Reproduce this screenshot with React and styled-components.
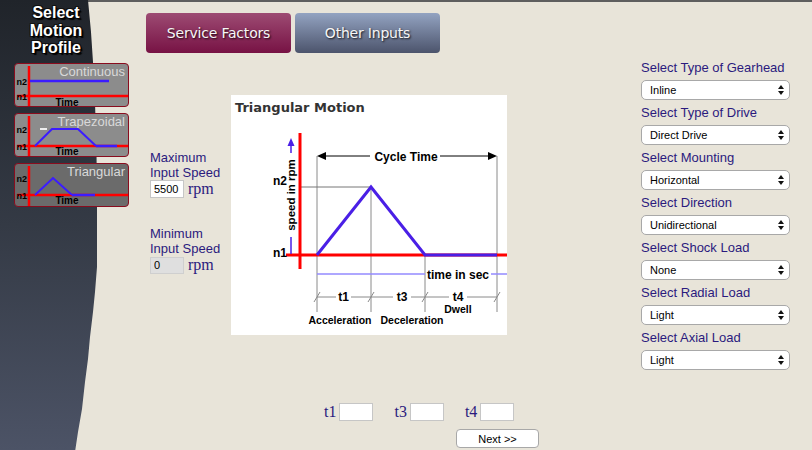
import React from 'react';
import styled, { createGlobalStyle } from 'styled-components';

const Global = createGlobalStyle`
  html, body { margin: 0; padding: 0; background: #e8e4d9; }
  body { font-family: "Liberation Sans", Arial, sans-serif; }
  * { box-sizing: border-box; }
`;

const INK = '#2b1a7e';
const BLUE = '#4a1fe6';

const Page = styled.div`
  display: flex;
  width: 812px;
  height: 450px;
  border-top: 2px solid #5e5e5e;
  background: #e8e4d9;
  position: relative;
`;

const Sidebar = styled.aside`
  position: relative;
  z-index: 0;
  flex: 0 0 134px;
  padding: 2px 0 0 14px;
  display: flex;
  flex-direction: column;
  gap: 6px;
  &::before {
    content: "";
    position: absolute;
    left: 0;
    top: -2px;
    bottom: 0;
    width: 98px;
    background: linear-gradient(#20242a 0%, #343a45 50%, #4c5366 100%);
    clip-path: polygon(0 0, 88px 0, 91px 32px, 93px 62px, 95px 102px, 96.5px 152px, 97px 202px, 97px 267px, 95px 292px, 93px 312px, 90px 337px, 88px 359px, 85px 382px, 82px 409px, 78px 432px, 75px 452px, 0 452px);
    z-index: -1;
  }
`;

const SideTitle = styled.h1`
  margin: 0;
  width: 84px;
  text-align: center;
  font: bold 16px/17.5px "Liberation Sans", Arial, sans-serif;
  color: #ffffff;
  text-shadow: 1px 1px 0 #000, -1px -1px 0 #111, 1px -1px 0 #111, -1px 1px 0 #111, 2px 2px 1px #000;
`;

const Card = styled.button`
  width: 115px;
  height: 44px;
  padding: 0;
  border: 1px solid #8a0c1e;
  border-radius: 4px;
  background: ${p => (p.$active ? '#6b6b6b' : '#8c8c8c')};
  cursor: pointer;
  overflow: hidden;
  svg { display: block; }
`;

const Main = styled.main`
  flex: 1;
  display: flex;
  flex-direction: column;
`;

const Tabs = styled.nav`
  display: flex;
  gap: 4px;
  margin: 11px 0 0 12px;
`;

const Tab = styled.button`
  width: 145px;
  height: 40px;
  border: 0;
  border-radius: 4px;
  background: ${p =>
    p.$variant === 'maroon'
      ? 'linear-gradient(#9d4b73, #771244)'
      : 'linear-gradient(#93a3c1, #4c546c)'};
  color: #f6f6f6;
  font: 14px "DejaVu Sans", Verdana, sans-serif;
  letter-spacing: -0.2px;
  text-shadow: 1px 1px 2px rgba(0, 0, 0, 0.85);
  cursor: pointer;
`;

const Content = styled.div`
  display: flex;
  align-items: flex-start;
`;

const SpeedCol = styled.div`
  width: 97px;
  padding-left: 16px;
  margin-top: 97px;
  display: flex;
  flex-direction: column;
  gap: 28px;
`;

const SpeedField = styled.div`
  display: flex;
  flex-direction: column;
`;

const FieldLabel = styled.label`
  font: 13px/15px "Liberation Sans", Arial, sans-serif;
  color: ${INK};
`;

const InputRow = styled.div`
  display: flex;
  align-items: center;
  gap: 4px;
`;

const SmallInput = styled.input`
  width: 34px;
  height: ${p => (p.$tall ? '18px' : '17px')};
  padding: 0 3px;
  border: 1px solid ${p => (p.disabled ? '#cfcfcf' : '#c6c6c6')};
  background: ${p => (p.disabled ? '#dfdfdf' : '#ffffff')};
  font: 11px "Liberation Sans", Arial, sans-serif;
  color: #000;
`;

const Unit = styled.span`
  font: 16px "Liberation Serif", "Times New Roman", serif;
  color: ${INK};
`;

const ChartBox = styled.figure`
  margin: 42px 0 0;
  width: 276px;
  height: 240px;
  background: #ffffff;
  display: flex;
  flex-direction: column;
  svg { display: block; }
`;

const ChartTitle = styled.figcaption`
  height: 24px;
  padding: 1px 0 0 4px;
  font: bold 13px/24px "DejaVu Sans", Verdana, sans-serif;
  color: #333333;
`;

const RightCol = styled.div`
  margin: 7px 0 0 134px;
  width: 149px;
  display: flex;
  flex-direction: column;
  gap: 5px;
`;

const SelectField = styled.div`
  display: flex;
  flex-direction: column;
  gap: 4px;
`;

const SelectLabel = styled.label`
  font: 13px/16px "Liberation Sans", Arial, sans-serif;
  color: ${INK};
  white-space: nowrap;
`;

const SelectWrap = styled.div`
  position: relative;
  height: 20px;
`;

const Select = styled.select`
  appearance: none;
  -webkit-appearance: none;
  width: 100%;
  height: 20px;
  padding: 0 0 0 8px;
  border: 1px solid #a8a8a8;
  border-radius: 5px;
  background: #ffffff;
  font: 11px "Liberation Sans", Arial, sans-serif;
  color: #000;
`;

const Arrows = styled.svg`
  position: absolute;
  right: 6px;
  top: 5px;
  pointer-events: none;
`;

const Bottom = styled.div`
  margin: 33px 0 0 190px;
  display: flex;
  flex-direction: column;
  align-items: flex-start;
  gap: 8px;
`;

const TRow = styled.div`
  display: flex;
  align-items: center;
  gap: 21px;
`;

const TGroup = styled.label`
  display: flex;
  align-items: center;
  gap: 3px;
  font: 16px "Liberation Serif", "Times New Roman", serif;
  color: ${INK};
`;

const NextButton = styled.button`
  margin-left: 132px;
  width: 83px;
  height: 19px;
  padding: 0;
  border: 1px solid #a8a8a8;
  border-radius: 4px;
  background: #ffffff;
  font: 11px "Liberation Sans", Arial, sans-serif;
  color: #000;
  cursor: pointer;
`;

const cardText = { fontFamily: '"Liberation Sans", Arial, sans-serif' };

function MiniChart({ label, top, base, shape, flatTo, whiteTick, labelY, timeY }) {
  return (
    <svg width="113" height="42" viewBox="0 0 113 42">
      <text x="110" y={labelY} textAnchor="end" fontSize="13" fill="#d9d9d9" style={cardText}>{label}</text>
      {whiteTick && <line x1="25" y1={top} x2="32" y2={top} stroke="#eeeeee" strokeWidth="2" />}
      <line x1="2" y1={base} x2="113" y2={base} stroke="#ff0000" strokeWidth="2.5" />
      <line x1="14" y1="2" x2="14" y2="42" stroke="#ff0000" strokeWidth="2.5" />
      {shape === 'flat' && <line x1="15" y1={top} x2="94" y2={top} stroke="#3b1cff" strokeWidth="2.5" />}
      {shape !== 'flat' && (
        <polyline points={shape} fill="none" stroke="#3b1cff" strokeWidth="2" />
      )}
      {flatTo && <line x1={flatTo[0]} y1={base} x2={flatTo[1]} y2={base} stroke="#3b1cff" strokeWidth="2.5" />}
      <text x="1.5" y={top + 3.5} fontSize="9" fontWeight="bold" fill="#000" style={cardText}>n2</text>
      <text x="1.5" y={base + 3.5} fontSize="9" fontWeight="bold" fill="#000" style={cardText}>n1</text>
      <text x="52" y={timeY} textAnchor="middle" fontSize="10" fontWeight="bold" fill="#000" style={cardText}>Time</text>
    </svg>
  );
}

const profiles = [
  { label: 'Continuous', top: 17, base: 32, shape: 'flat', labelY: 11.5, timeY: 41.5 },
  { label: 'Trapezoidal', top: 15, base: 32, shape: '20,32 37,15 63,15 81,32', flatTo: [81, 102], whiteTick: true, labelY: 11.5, timeY: 41 },
  { label: 'Triangular', top: 14, base: 31, shape: '20,31 38,14 57,31', flatTo: [57, 80], labelY: 11.5, timeY: 40, active: true },
];

const T = { fontFamily: '"Liberation Sans", Arial, sans-serif', fontWeight: 'bold' };

function TriangularChart() {
  const grey = '#8a8a8a';
  return (
    <svg width="276" height="216" viewBox="0 24 276 216">
      <line x1="86" y1="61" x2="86" y2="217" stroke={grey} strokeWidth="1" />
      <line x1="140" y1="92" x2="140" y2="217" stroke={grey} strokeWidth="1" />
      <line x1="194" y1="160" x2="194" y2="217" stroke={grey} strokeWidth="1" />
      <line x1="266" y1="61" x2="266" y2="217" stroke={grey} strokeWidth="1" />
      <line x1="68" y1="92" x2="140" y2="92" stroke="#777" strokeWidth="1" />

      <line x1="69" y1="38" x2="69" y2="174" stroke="#ff0000" strokeWidth="3" />
      <line x1="55" y1="160" x2="276" y2="160" stroke="#ff0000" strokeWidth="3" />

      <polyline points="86,160 140,92 194,160 266,160" fill="none" stroke={BLUE} strokeWidth="3" />

      <polygon points="60,43 56.5,51 63.5,51" fill={BLUE} />
      <line x1="60" y1="50" x2="60" y2="58" stroke={BLUE} strokeWidth="1.5" />
      <line x1="60" y1="142" x2="60" y2="159" stroke={BLUE} strokeWidth="1.5" />
      <text x="0" y="0" transform="translate(64 100) rotate(-90)" textAnchor="middle" fontSize="11.5" fill="#000" style={T}>speed in rpm</text>

      <text x="42" y="90" fontSize="12" fill="#000" style={T}>n2</text>
      <text x="42" y="162" fontSize="12" fill="#000" style={T}>n1</text>

      <line x1="90" y1="61" x2="139" y2="61" stroke="#000" strokeWidth="1" />
      <line x1="209" y1="61" x2="262" y2="61" stroke="#000" strokeWidth="1" />
      <polygon points="86,61 95,57 95,65" fill="#000" />
      <polygon points="266,61 257,57 257,65" fill="#000" />
      <text x="175" y="65.5" textAnchor="middle" fontSize="12" fill="#000" style={T}>Cycle Time</text>

      <line x1="86" y1="179" x2="194" y2="179" stroke="#938aff" strokeWidth="1.5" />
      <line x1="260" y1="179" x2="276" y2="179" stroke="#938aff" strokeWidth="1.5" />
      <text x="227" y="183.5" textAnchor="middle" fontSize="12" fill="#000" style={T}>time in sec</text>

      <line x1="86" y1="202" x2="105" y2="202" stroke={grey} strokeWidth="1" />
      <line x1="120" y1="202" x2="162" y2="202" stroke={grey} strokeWidth="1" />
      <line x1="180" y1="202" x2="218" y2="202" stroke={grey} strokeWidth="1" />
      <line x1="236" y1="202" x2="266" y2="202" stroke={grey} strokeWidth="1" />
      {[86, 140, 194, 266].map(x => (
        <line key={x} x1={x - 3} y1="207" x2={x + 3} y2="197" stroke={grey} strokeWidth="1" />
      ))}
      <text x="112.5" y="205.5" textAnchor="middle" fontSize="12" fill="#000" style={T}>t1</text>
      <text x="171" y="205.5" textAnchor="middle" fontSize="12" fill="#000" style={T}>t3</text>
      <text x="227" y="205.5" textAnchor="middle" fontSize="12" fill="#000" style={T}>t4</text>
      <text x="227" y="217.5" textAnchor="middle" fontSize="10.5" fill="#000" style={T}>Dwell</text>
      <text x="109" y="228.5" textAnchor="middle" fontSize="10.5" fill="#000" style={T}>Acceleration</text>
      <text x="181" y="228.5" textAnchor="middle" fontSize="10.5" fill="#000" style={T}>Deceleration</text>
    </svg>
  );
}

const selects = [
  { label: 'Select Type of Gearhead', value: 'Inline', options: ['Inline', 'Right Angle'] },
  { label: 'Select Type of Drive', value: 'Direct Drive', options: ['Direct Drive', 'Belt Drive'] },
  { label: 'Select Mounting', value: 'Horizontal', options: ['Horizontal', 'Vertical'] },
  { label: 'Select Direction', value: 'Unidirectional', options: ['Unidirectional', 'Bidirectional'] },
  { label: 'Select Shock Load', value: 'None', options: ['None', 'Light', 'Medium', 'Heavy'] },
  { label: 'Select Radial Load', value: 'Light', options: ['None', 'Light', 'Medium', 'Heavy'] },
  { label: 'Select Axial Load', value: 'Light', options: ['None', 'Light', 'Medium', 'Heavy'] },
];

export default function App() {
  return (
    <>
      <Global />
      <Page>
        <Sidebar>
          <SideTitle>Select<br />Motion<br />Profile</SideTitle>
          {profiles.map(p => (
            <Card key={p.label} $active={p.active}>
              <MiniChart {...p} />
            </Card>
          ))}
        </Sidebar>
        <Main>
          <Tabs>
            <Tab $variant="maroon">Service Factors</Tab>
            <Tab $variant="slate">Other Inputs</Tab>
          </Tabs>
          <Content>
            <SpeedCol>
              <SpeedField>
                <FieldLabel>Maximum<br />Input Speed</FieldLabel>
                <InputRow>
                  <SmallInput $tall defaultValue="5500" />
                  <Unit>rpm</Unit>
                </InputRow>
              </SpeedField>
              <SpeedField>
                <FieldLabel>Minimum<br />Input Speed</FieldLabel>
                <InputRow>
                  <SmallInput disabled defaultValue="0" />
                  <Unit>rpm</Unit>
                </InputRow>
              </SpeedField>
            </SpeedCol>
            <ChartBox>
              <ChartTitle>Triangular Motion</ChartTitle>
              <TriangularChart />
            </ChartBox>
            <RightCol>
              {selects.map(s => (
                <SelectField key={s.label}>
                  <SelectLabel>{s.label}</SelectLabel>
                  <SelectWrap>
                    <Select defaultValue={s.value}>
                      {s.options.map(o => <option key={o}>{o}</option>)}
                    </Select>
                    <Arrows width="6" height="10" viewBox="0 0 6 10">
                      <polygon points="3,0 6,4 0,4" fill="#111" />
                      <polygon points="0,6 6,6 3,10" fill="#111" />
                    </Arrows>
                  </SelectWrap>
                </SelectField>
              ))}
            </RightCol>
          </Content>
          <Bottom>
            <TRow>
              <TGroup>t1<SmallInput $tall /></TGroup>
              <TGroup>t3<SmallInput $tall /></TGroup>
              <TGroup>t4<SmallInput $tall /></TGroup>
            </TRow>
            <NextButton>Next &gt;&gt;</NextButton>
          </Bottom>
        </Main>
      </Page>
    </>
  );
}
